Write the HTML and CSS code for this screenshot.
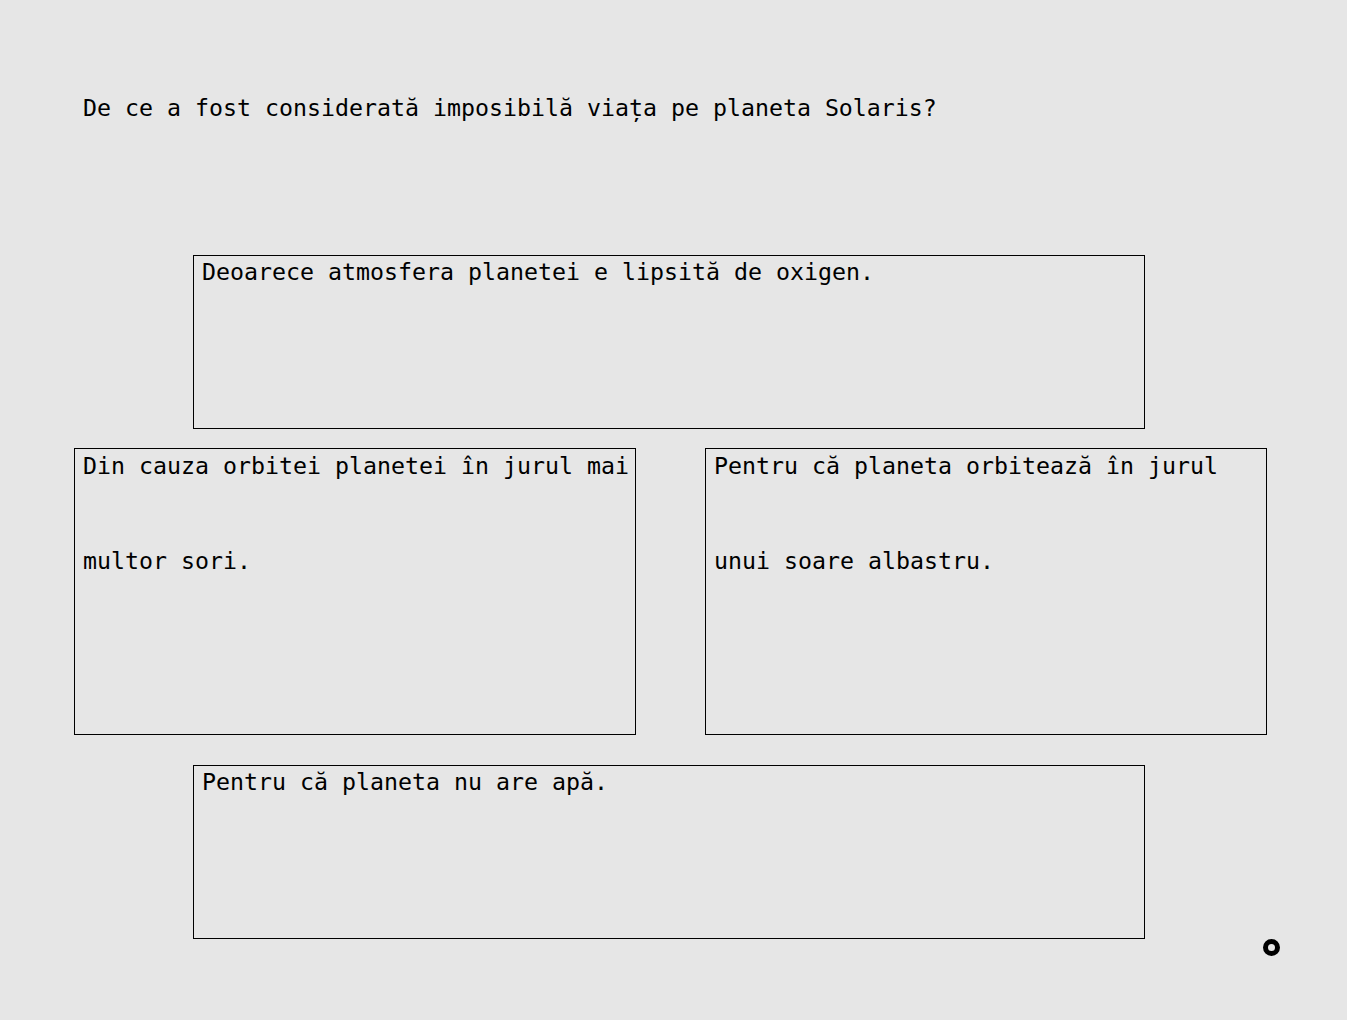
FILE: index.html
```html
<!DOCTYPE html>
<html lang="ro">
<head>
<meta charset="utf-8">
<title>Solaris</title>
<link rel="stylesheet" href="styles.css">
</head>
<body>
<main class="page">
  <h1 class="question">De ce a fost considerată imposibilă viața pe planeta Solaris?</h1>
  <section class="answers">
    <div class="answer answer-wide">
      <span class="line">Deoarece atmosfera planetei e lipsită de oxigen.</span>
    </div>
    <div class="answer-row">
      <div class="answer answer-tall">
        <span class="line">Din cauza orbitei planetei în jurul mai</span>
        <span class="line line-far">multor sori.</span>
      </div>
      <div class="answer answer-tall">
        <span class="line">Pentru că planeta orbitează în jurul</span>
        <span class="line line-far">unui soare albastru.</span>
      </div>
    </div>
    <div class="answer answer-wide answer-last">
      <span class="line">Pentru că planeta nu are apă.</span>
    </div>
  </section>
  <div class="marker"></div>
</main>
</body>
</html>
```

FILE: styles.css
```css
html, body {
  margin: 0;
  padding: 0;
  background: #e6e6e6;
}
body {
  font-family: "DejaVu Sans Mono", "Liberation Mono", monospace;
  font-size: 23.25px;
  line-height: 28px;
  color: #000;
}
.page {
  position: relative;
  width: 1347px;
  height: 1020px;
  box-sizing: border-box;
  padding-top: 94px;
}
.question {
  margin: 0 0 0 83px;
  font-size: 23.25px;
  font-weight: normal;
  line-height: 28px;
}
.answers {
  margin-top: 133px;
  margin-left: 74px;
  display: flex;
  flex-direction: column;
  align-items: flex-start;
}
.answer {
  box-sizing: border-box;
  border: 1px solid #000;
  padding: 2px 8px;
  display: flex;
  flex-direction: column;
}
.answer-wide {
  width: 952px;
  height: 174px;
  margin-left: 119px;
}
.answer-last {
  margin-top: 30px;
}
.answer-row {
  display: flex;
  gap: 69px;
  margin-top: 19px;
}
.answer-tall {
  width: 562px;
  height: 287px;
  padding-top: 3px;
}
.line {
  display: block;
  white-space: pre;
}
.line-far {
  margin-top: 67px;
}
.marker {
  position: absolute;
  left: 1263px;
  top: 939px;
  width: 17px;
  height: 17px;
  box-sizing: border-box;
  border: 5px solid #000;
  border-radius: 50%;
}
```
